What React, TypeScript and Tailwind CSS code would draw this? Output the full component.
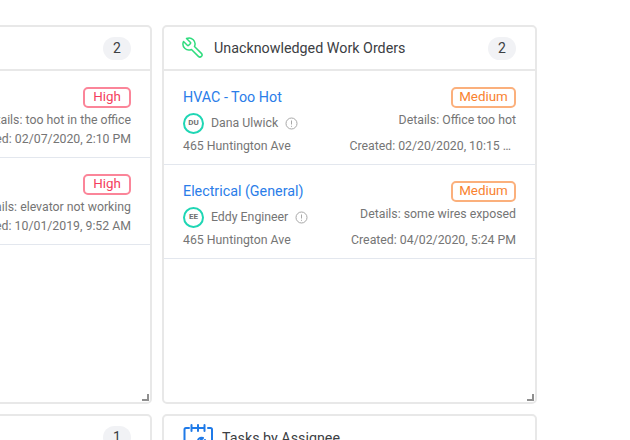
import React from "react";

const Wrench = () => (
  <svg width="24" height="24" viewBox="0 0 24 24" fill="none" stroke="#2fdc7e" strokeWidth="1.5" strokeLinecap="round" strokeLinejoin="round">
    <path transform="translate(24 0) scale(-1 1)" d="M14.7 6.3a1 1 0 0 0 0 1.4l1.6 1.6a1 1 0 0 0 1.4 0l3.77-3.77a6 6 0 0 1-7.94 7.94l-6.91 6.91a2.12 2.12 0 0 1-3-3l6.91-6.91a6 6 0 0 1 7.94-7.94l-3.76 3.76z" />
  </svg>
);

const CalendarWrench = () => (
  <svg width="30" height="30" viewBox="0 0 30 30" fill="none" stroke="#1f7ae8" strokeWidth="2" strokeLinecap="round" strokeLinejoin="round">
    <path d="M6 5 H3 C2 5 1.5 5.6 1.5 6.5 V22 M29 22 V6.5 C29 5.6 28.5 5 27.5 5 H25" />
    <path d="M8.5 2 V8 M15 2 V8 M21.5 2 V8 M8.5 5 H21.5" />
    <path d="M8 26 L15 19 C14.5 16 17 14 20 15 L18 17 L20 19 L22 17 C23 20 20.5 22 18 21.5 L12 28" />
  </svg>
);

const Info = () => (
  <svg width="13" height="13" viewBox="0 0 13 13" fill="none" stroke="#a8a8a8" strokeWidth="1">
    <circle cx="6.5" cy="6.5" r="5.5" />
    <path d="M6.5 3.5 V7.5 M6.5 8.8 V9.8" />
  </svg>
);

const Count = ({ n }: { n: number }) => (
  <span className="flex h-[23px] w-[28px] items-center justify-center rounded-full bg-[#f1f2f5] text-[14px] text-[#3c4043]">{n}</span>
);

const Priority = ({ label, high }: { label: string; high?: boolean }) => (
  <span className={high
    ? "flex h-[21px] w-[48px] items-center justify-center rounded-[5px] border-2 border-[#fb8599] text-[13.4px] text-[#f43f5e]"
    : "flex h-[21px] w-[65px] items-center justify-center rounded-[5px] border-2 border-[#fbb07c] text-[13.4px] text-[#f9822f]"}>{label}</span>
);

type Row = { title: string; initials: string; name: string; priority: string; high?: boolean; details: string; created: string; clipped?: boolean };

const WorkRow = ({ r, tall }: { r: Row; tall?: boolean }) => (
  <div className={`flex border-b border-[#e3e7ee] pl-[19px] pr-[19px] pt-[15px] ${tall ? "h-[94px]" : "h-[87px]"}`}>
    <div className="flex flex-col">
      <div className="h-[22px] text-[14.3px] leading-[22px] text-[#2a7de9]">{r.title}</div>
      <div className="mt-[4px] flex h-[22px] items-center">
        <span className="flex h-[21px] w-[21px] items-center justify-center rounded-full border-2 border-[#1fd6b4] text-[8px] font-bold text-[#6f6f6f]">{r.initials}</span>
        <span className="ml-[7px] text-[12.3px] text-[#757575]">{r.name}</span>
        <span className="ml-[7px] flex"><Info /></span>
      </div>
      <div className="mt-[3px] text-[12.3px] leading-[18px] text-[#757575]">465 Huntington Ave</div>
    </div>
    <div className="ml-auto flex min-w-0 flex-col items-end">
      <div className="pt-[1px]"><Priority label={r.priority} high={r.high} /></div>
      <div className="mt-[3px] text-[12.3px] leading-[18px] text-[#757575]">{r.details}</div>
      <div className={`${tall ? "mt-[8px]" : "mt-[1px]"} ${r.clipped ? "mr-[5px]" : ""} text-[12.3px] leading-[18px] text-[#757575]`}>{r.created}</div>
    </div>
  </div>
);

const Card = ({ title, count, rows, tall }: { title: string; count: number; rows: Row[]; tall?: boolean }) => (
  <section className="relative h-[379px] rounded-[5px] border-2 border-[#e8e8e8] bg-white">
    <header className="flex h-[44px] items-center border-b-2 border-[#e8e8e8] pl-[17px] pr-[19px]">
      <Wrench />
      <h2 className="ml-[9px] mt-[1px] text-[14.3px] font-normal text-[#3c4043]">{title}</h2>
      <span className="ml-auto"><Count n={count} /></span>
    </header>
    {rows.map((r) => <WorkRow key={r.title} r={r} tall={tall} />)}
    <span className="absolute bottom-[1px] right-[1px] h-[7px] w-[7px] border-b-2 border-r-2 border-[#8f8f8f]" />
  </section>
);

export default function App() {
  const left: Row[] = [
    { title: "HVAC", initials: "DU", name: "Dana Ulwick", priority: "High", high: true, details: "Details: too hot in the office", created: "Created: 02/07/2020, 2:10 PM" },
    { title: "Elevator", initials: "EE", name: "Eddy Engineer", priority: "High", high: true, details: "Details: elevator not working", created: "Created: 10/01/2019, 9:52 AM" },
  ];
  const right: Row[] = [
    { title: "HVAC - Too Hot", initials: "DU", name: "Dana Ulwick", priority: "Medium", details: "Details: Office too hot", created: "Created: 02/20/2020, 10:15 …", clipped: true },
    { title: "Electrical (General)", initials: "EE", name: "Eddy Engineer", priority: "Medium", details: "Details: some wires exposed", created: "Created: 04/02/2020, 5:24 PM" },
  ];
  return (
    <div className="h-[440px] w-[630px] overflow-hidden bg-white font-['Roboto',sans-serif]">
      <div className="ml-[-223px] grid w-[760px] grid-cols-[375px_375px] gap-x-[10px] gap-y-[10px] pt-[25px]">
        <Card title="Overdue Work Orders" count={2} rows={left} />
        <Card title="Unacknowledged Work Orders" count={2} rows={right} tall />
        <section className="flex h-[60px] items-start justify-end rounded-[5px] border-2 border-[#e8e8e8] bg-white pr-[19px] pt-[10px]">
          <Count n={1} />
        </section>
        <section className="flex h-[60px] items-start rounded-[5px] border-2 border-[#e8e8e8] bg-white pl-[19px] pt-[7px]">
          <CalendarWrench />
          <h2 className="ml-[9px] mt-[5px] text-[14.3px] font-normal text-[#3c4043]">Tasks by Assignee</h2>
        </section>
      </div>
    </div>
  );
}
